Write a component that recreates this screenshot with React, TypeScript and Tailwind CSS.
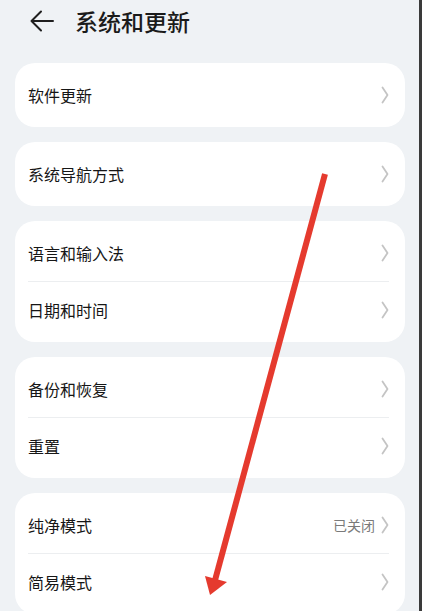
import React from "react";

const Chevron = () => (
  <svg width="8" height="18" viewBox="0 0 8 18" className="shrink-0">
    <path d="M1.5 1.5 L6.5 9 L1.5 16.5" fill="none" stroke="#c4c4c4" strokeWidth="1.8" strokeLinecap="round" strokeLinejoin="round" />
  </svg>
);

type Item = { label: string; value?: string };

const Row = ({ item }: { item: Item }) => (
  <div className="h-[56px] flex items-center justify-between">
    <span className="text-[16px] text-[#161616]">{item.label}</span>
    <div className="flex items-center gap-[6px]">
      {item.value && <span className="text-[14px] text-[#7a7a7a]">{item.value}</span>}
      <Chevron />
    </div>
  </div>
);

const Card = ({ items }: { items: Item[] }) => (
  <div className="w-[390px] ml-[15px] bg-white rounded-[20px] pl-[13px] pr-[16px] py-[4px] shrink-0">
    {items.map((it, i) => (
      <React.Fragment key={it.label}>
        {i > 0 && <div className="h-px bg-[#eceef0]" />}
        <Row item={it} />
      </React.Fragment>
    ))}
  </div>
);

export default function App() {
  const groups: Item[][] = [
    [{ label: "软件更新" }],
    [{ label: "系统导航方式" }],
    [{ label: "语言和输入法" }, { label: "日期和时间" }],
    [{ label: "备份和恢复" }, { label: "重置" }],
    [{ label: "纯净模式", value: "已关闭" }, { label: "简易模式" }],
  ];
  return (
    <div
      className="w-[422px] h-[611px] overflow-hidden relative flex bg-[#eff2f5]"
      style={{ fontFamily: '"Noto Sans CJK SC", "Noto Sans", sans-serif' }}
    >
      <div className="flex-1 flex flex-col">
        <div className="h-[42px] flex items-center pl-[30px] gap-[21px] shrink-0">
          <svg width="24" height="22" viewBox="0 0 24 22">
            <path d="M11 1.5 L1.5 11 L11 20.5 M1.5 11 H23" fill="none" stroke="#1f1f1f" strokeWidth="2" strokeLinecap="round" strokeLinejoin="round" />
          </svg>
          <span className="text-[23px] font-medium text-[#1b1b1b] leading-none">系统和更新</span>
        </div>
        <div className="flex flex-col gap-[15px] pt-[21px]">
          {groups.map((g, i) => (
            <Card key={i} items={g} />
          ))}
        </div>
      </div>
      <div className="w-[3px] bg-[#3a3a3a] shrink-0" />
      <svg className="absolute left-0 top-0 pointer-events-none" width="422" height="611" viewBox="0 0 422 611">
        <line x1="325" y1="174" x2="214" y2="584" stroke="#e53a2e" strokeWidth="6" strokeLinecap="butt" />
        <polygon points="205,576 227,582 210,595" fill="#e53a2e" />
      </svg>
    </div>
  );
}
